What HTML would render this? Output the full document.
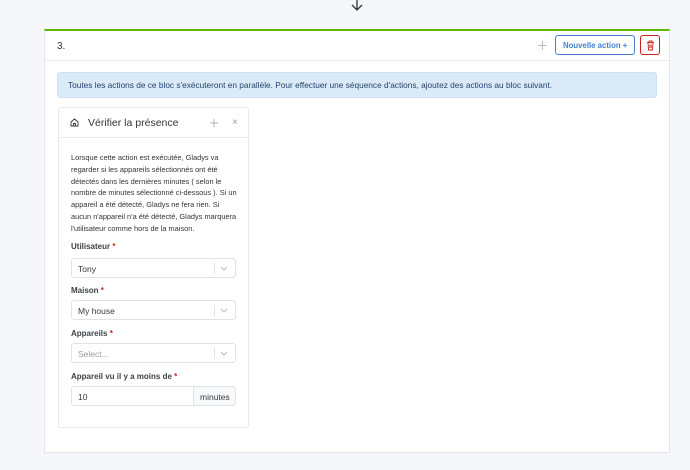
<!DOCTYPE html>
<html><head><meta charset="utf-8"><style>
*{box-sizing:border-box;margin:0;padding:0}
body{width:690px;height:470px;background:#f5f7fb;font-family:"Liberation Sans",sans-serif;color:#495057;position:relative;overflow:hidden}
.abs{position:absolute}
.card{left:44px;top:29px;width:626px;height:424px;background:#fff;border:1px solid #e3e6ec;border-top:2px solid #5eba00}
.hdr{left:0;top:0;width:624px;height:30px;border-bottom:1px solid #e9ecef}
.alert{left:57px;top:72px;width:600px;height:26px;background:#dbeaf7;border:1px solid #cfe2f3;border-radius:3px;font-size:8.3px;color:#24426c;padding:7px 10px;white-space:nowrap}
.ic{left:58px;top:107px;width:191px;height:321px;border:1px solid #e6e8ec;border-radius:3px;background:#fff}
.ih{left:0;top:0;width:189px;height:30px;border-bottom:1px solid #e9ecef}
.lbl{font-size:8px;color:#3d4348;font-weight:bold}
.lbl span{color:#cd201f}
.sel{width:165px;height:20px;border:1px solid #dfe3e8;border-radius:3px;font-size:8.5px;padding:5px 6px;color:#343a40}
.sel:after{content:"";position:absolute;right:20px;top:4px;width:1px;height:11px;background:#dfe3e8}
.chev{position:absolute;right:6px;top:4px}
</style></head><body>
<svg class="abs" style="left:350px;top:0" width="14" height="12" viewBox="0 0 14 12"><path d="M7 0V10M2 5L7 10L12 5" stroke="#333" stroke-width="1.3" fill="none"/></svg>
<div class="abs card">
 <div class="abs hdr">
  <div class="abs" style="left:12px;top:10px;font-size:10px;color:#333">3.</div>
  <svg class="abs" style="left:493px;top:10px" width="9" height="9" viewBox="0 0 9 9"><path d="M4.5 0V9M0 4.5H9" stroke="#aaa" stroke-width="0.8"/></svg>
  <div class="abs" style="left:510px;top:4px;width:80px;height:20px;border:1px solid #467fcf;border-radius:3px;color:#467fcf;font-size:7.8px;font-weight:bold;padding:5px 0 0 7px;white-space:nowrap">Nouvelle action +</div>
  <div class="abs" style="left:595px;top:4px;width:20px;height:20px;border:1px solid #cd201f;border-radius:3px">
   <svg class="abs" style="left:5px;top:4px" width="9" height="11" viewBox="0 0 9 11"><path d="M1 2.5H8M3 2.5V1H6V2.5M2 2.5L2.5 10H6.5L7 2.5M3.8 4.5V8M5.2 4.5V8" stroke="#cd201f" stroke-width="0.9" fill="none"/></svg>
  </div>
 </div>
</div>
<div class="abs alert">Toutes les actions de ce bloc s'exécuteront en parallèle. Pour effectuer une séquence d'actions, ajoutez des actions au bloc suivant.</div>
<div class="abs ic">
 <div class="abs ih">
  <svg class="abs" style="left:11px;top:10px" width="9" height="9" viewBox="0 0 9 9"><path d="M1 4L4.5 1L8 4V8H1Z M3.5 8V5.5H5.5V8" stroke="#333" stroke-width="0.9" fill="none"/></svg>
  <div class="abs" style="left:29px;top:9px;font-size:10.5px;color:#333">Vérifier la présence</div>
  <svg class="abs" style="left:151px;top:11px" width="8" height="8" viewBox="0 0 9 9"><path d="M4.5 0V9M0 4.5H9" stroke="#999" stroke-width="0.8"/></svg>
  <div class="abs" style="left:173px;top:9px;font-size:10px;color:#999">×</div>
 </div>
 <div class="abs" style="left:12px;top:44px;width:168px;font-size:7.4px;line-height:11.8px;color:#333">Lorsque cette action est exécutée, Gladys va regarder si les appareils sélectionnés ont été détectés dans les dernières minutes ( selon le nombre de minutes sélectionné ci-dessous ). Si un appareil a été détecté, Gladys ne fera rien. Si aucun n'appareil n'a été détecté, Gladys marquera l'utilisateur comme hors de la maison.</div>
 <div class="abs lbl" style="left:12px;top:134px">Utilisateur <span>*</span></div>
 <div class="abs sel" style="left:12px;top:150px">Tony<svg class="chev" width="10" height="10"><path d="M2 4L5 7L8 4" stroke="#bbb" fill="none"/></svg></div>
 <div class="abs lbl" style="left:12px;top:178px">Maison <span>*</span></div>
 <div class="abs sel" style="left:12px;top:192px">My house<svg class="chev" width="10" height="10"><path d="M2 4L5 7L8 4" stroke="#bbb" fill="none"/></svg></div>
 <div class="abs lbl" style="left:12px;top:221px">Appareils <span>*</span></div>
 <div class="abs sel" style="left:12px;top:235px;color:#999">Select...<svg class="chev" width="10" height="10"><path d="M2 4L5 7L8 4" stroke="#bbb" fill="none"/></svg></div>
 <div class="abs lbl" style="left:12px;top:264px">Appareil vu il y a moins de <span>*</span></div>
 <div class="abs" style="left:12px;top:278px;width:165px;height:20px;border:1px solid #dfe3e8;border-radius:3px;font-size:8.5px;color:#343a40;overflow:hidden">
  <div class="abs" style="left:6px;top:5px">10</div>
  <div class="abs" style="right:0;top:0;width:42px;height:18px;background:#f8f9fa;border-left:1px solid #dfe3e8;padding:5px 0 0 6px">minutes</div>
 </div>
</div>
</body></html>
